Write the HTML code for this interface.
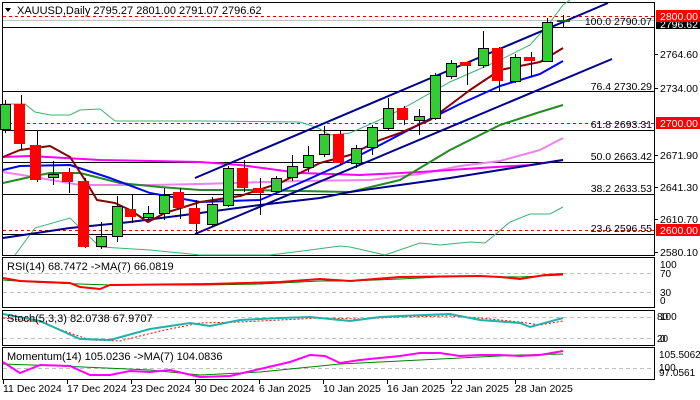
<!DOCTYPE html>
<html><head><meta charset="utf-8"><style>
html,body{margin:0;padding:0;background:#fff;width:700px;height:400px;overflow:hidden}
svg{display:block;font-family:"Liberation Sans",sans-serif}
</style></head><body>
<svg width="700" height="400" viewBox="0 0 700 400" xmlns="http://www.w3.org/2000/svg">
<rect width="700" height="400" fill="#fff"/>
<!-- panel frames -->
<g fill="none" stroke="#000" stroke-width="1">
<rect x="2.5" y="2.5" width="652" height="253"/>
<rect x="2.5" y="257.5" width="652" height="50"/>
<rect x="2.5" y="310.5" width="652" height="35"/>
<rect x="2.5" y="347.5" width="652" height="32"/>
</g>
<!-- fib horizontal lines -->
<g stroke="#000" stroke-width="1">
<line x1="3" y1="27.5" x2="654" y2="27.5"/>
<line x1="3" y1="91.5" x2="654" y2="91.5"/>
<line x1="3" y1="130.5" x2="654" y2="130.5"/>
<line x1="3" y1="162.5" x2="654" y2="162.5"/>
<line x1="3" y1="194.5" x2="654" y2="194.5"/>
<line x1="3" y1="234.5" x2="654" y2="234.5"/>
</g>
<line x1="3" y1="20.5" x2="654" y2="20.5" stroke="#c0c0c0"/>
<g stroke="#e00" stroke-dasharray="3,3">
<line x1="3" y1="16.5" x2="654" y2="16.5"/>
<line x1="3" y1="123.5" x2="654" y2="123.5"/>
<line x1="3" y1="230.5" x2="654" y2="230.5"/>
</g>
<!-- thin green bands -->
<g fill="none" stroke="#3cb371" stroke-width="1">
<polyline points="3,104 25,104 35,112 50,115 70,115 80,110 100,109 115,121 200,121 300,122 318,128 330,135 350,133 375,122 400,110 450,82 500,60 530,45 548,25 563,5 570,0"/>
<polyline points="15,255 35,228 70,218 100,247 150,250 200,255 270,255 310,250 340,246 350,247 385,255 420,243 440,245 470,242 485,243 510,222 530,214 550,214 563,207"/>
</g>
<!-- MAs -->
<g fill="none" stroke-width="2" stroke-linejoin="round">
<polyline stroke="#ee82ee" points="3,172 40,178 80,185 150,185 200,184 300,181 370,180 420,174 460,166 500,161 540,150 563,138"/>
<polyline stroke="#ff00ff" points="3,157 30,156 100,160 200,162 240,165 300,173 360,175 420,172 480,168 530,165 563,160"/>
<polyline stroke="#228b22" points="3,183 30,177 50,173 80,173 120,183 160,187 200,190 250,190 300,191 350,192 400,180 450,150 500,125 540,112 563,105"/>
<polyline stroke="#0000ff" points="3,170 20,166 70,165 110,178 150,193 200,202 260,200 300,183 340,165 380,145 420,124 460,104 500,86 540,74 563,61"/>
<polyline stroke="#00008b" points="3,238 70,228 130,222 200,213 260,205 320,198 350,192 400,185 450,178 500,170 563,160"/>
<polyline stroke="#8b0000" points="3,157 20,150 50,146 70,157 85,180 97,200 115,203 130,210 148,222 165,213 200,202 240,196 280,183 320,163 350,155 380,140 400,133 430,120 470,90 500,70 540,62 563,48"/>
</g>
<!-- channel lines -->
<g stroke="#00008b" stroke-width="2">
<line x1="195" y1="178" x2="608" y2="3"/>
<line x1="195" y1="234" x2="612" y2="59"/>
</g>
<!-- candles -->
<g stroke="#000" stroke-width="1">
<line x1="5.5" y1="100" x2="5.5" y2="133"/><line x1="21.5" y1="95" x2="21.5" y2="150"/><line x1="37.5" y1="131" x2="37.5" y2="182"/><line x1="53.5" y1="161" x2="53.5" y2="185"/><line x1="69.5" y1="168" x2="69.5" y2="193"/><line x1="85.5" y1="178" x2="85.5" y2="248"/><line x1="101.5" y1="222" x2="101.5" y2="249"/><line x1="117.5" y1="196" x2="117.5" y2="242"/><line x1="132.5" y1="195" x2="132.5" y2="223"/><line x1="148.5" y1="206" x2="148.5" y2="220"/><line x1="164.5" y1="188" x2="164.5" y2="220"/><line x1="180.5" y1="188" x2="180.5" y2="219"/><line x1="196.5" y1="200" x2="196.5" y2="234"/><line x1="212.5" y1="197" x2="212.5" y2="227"/><line x1="228.5" y1="166" x2="228.5" y2="207"/><line x1="244.5" y1="160" x2="244.5" y2="192"/><line x1="260.5" y1="178" x2="260.5" y2="215"/><line x1="276.5" y1="176" x2="276.5" y2="193"/><line x1="292.5" y1="155" x2="292.5" y2="181"/><line x1="308.5" y1="146" x2="308.5" y2="172"/><line x1="324.5" y1="126" x2="324.5" y2="157"/><line x1="340.5" y1="130" x2="340.5" y2="165"/><line x1="356.5" y1="145" x2="356.5" y2="168"/><line x1="372.5" y1="125" x2="372.5" y2="155"/><line x1="388.5" y1="98" x2="388.5" y2="131"/><line x1="404.5" y1="106" x2="404.5" y2="125"/><line x1="419.5" y1="109" x2="419.5" y2="135"/><line x1="435.5" y1="73" x2="435.5" y2="120"/><line x1="451.5" y1="60" x2="451.5" y2="79"/><line x1="467.5" y1="62" x2="467.5" y2="85"/><line x1="483.5" y1="31" x2="483.5" y2="68"/><line x1="499.5" y1="47" x2="499.5" y2="91"/><line x1="515.5" y1="54" x2="515.5" y2="83"/><line x1="531.5" y1="52" x2="531.5" y2="76"/><line x1="547.5" y1="18" x2="547.5" y2="62"/><line x1="563.5" y1="15" x2="563.5" y2="27"/>
</g>
<g fill="#32cd32" stroke="#000" stroke-width="1">
<rect x="0.5" y="104.5" width="10" height="25"/><rect x="48.5" y="174.5" width="10" height="3"/><rect x="96.5" y="236.5" width="10" height="10"/><rect x="112.5" y="206.5" width="10" height="30"/><rect x="143.5" y="213.5" width="10" height="4"/><rect x="159.5" y="195.5" width="10" height="18"/><rect x="207.5" y="204.5" width="10" height="20"/><rect x="223.5" y="168.5" width="10" height="37"/><rect x="271.5" y="178.5" width="10" height="13"/><rect x="287.5" y="166.5" width="10" height="11"/><rect x="303.5" y="155.5" width="10" height="12"/><rect x="319.5" y="134.5" width="10" height="20"/><rect x="351.5" y="148.5" width="10" height="15"/><rect x="367.5" y="127.5" width="10" height="20"/><rect x="383.5" y="108.5" width="10" height="20"/><rect x="414.5" y="116.5" width="10" height="4"/><rect x="430.5" y="75.5" width="10" height="43"/><rect x="446.5" y="63.5" width="10" height="13"/><rect x="478.5" y="48.5" width="10" height="17"/><rect x="510.5" y="57.5" width="10" height="24"/><rect x="542.5" y="22.5" width="10" height="39"/>
</g>
<rect x="7" y="0" width="0" height="0"/>
<g fill="#ff0000">
<rect x="14" y="104" width="11" height="40"/><rect x="30" y="145" width="11" height="35"/><rect x="62" y="172" width="11" height="10"/><rect x="78" y="181" width="11" height="66"/><rect x="125" y="209" width="11" height="8"/><rect x="173" y="192" width="11" height="16"/><rect x="189" y="208" width="11" height="16"/><rect x="237" y="168" width="11" height="20"/><rect x="253" y="188" width="11" height="5"/><rect x="333" y="134" width="11" height="29"/><rect x="397" y="108" width="11" height="12"/><rect x="460" y="62" width="11" height="4"/><rect x="492" y="48" width="11" height="33"/><rect x="524" y="57" width="11" height="4"/>
</g>
<line x1="557" y1="21" x2="570" y2="21" stroke="#000" stroke-width="2"/>
<line x1="557" y1="21" x2="570" y2="21" stroke="#32cd32" stroke-width="1"/>
<!-- header -->
<polygon points="5,8 11,8 8,12" fill="#000"/>
<text x="17" y="14" font-size="11" fill="#000">XAUUSD,Daily  2795.27 2801.00 2791.07 2796.62</text>
<!-- fib labels -->
<g font-size="10.5" fill="#000" text-anchor="end">
<text x="652" y="25">100.0 2790.07</text>
<text x="652" y="90">76.4 2730.29</text>
<text x="652" y="128">61.8 2693.31</text>
<text x="652" y="160">50.0 2663.42</text>
<text x="652" y="192">38.2 2633.53</text>
<text x="652" y="232">23.6 2596.55</text>
</g>
<!-- price axis -->
<g stroke="#000"><line x1="655" y1="54.5" x2="658" y2="54.5"/><line x1="655" y1="88.5" x2="658" y2="88.5"/><line x1="655" y1="155.5" x2="658" y2="155.5"/><line x1="655" y1="187.5" x2="658" y2="187.5"/><line x1="655" y1="219.5" x2="658" y2="219.5"/><line x1="655" y1="252.5" x2="658" y2="252.5"/></g>
<rect x="656" y="21" width="44" height="8" fill="#000"/>
<text x="660" y="28" font-size="10.5" fill="#fff">2796.62</text>
<g font-size="10.5" fill="#000">
<text x="660" y="58">2764.60</text><text x="660" y="92">2734.00</text><text x="660" y="159">2671.90</text><text x="660" y="191">2641.30</text><text x="660" y="223">2610.70</text><text x="660" y="256">2580.10</text>
</g>
<g fill="#ff0000"><rect x="656" y="10" width="44" height="12"/><rect x="656" y="117" width="44" height="12"/><rect x="656" y="224" width="44" height="12"/></g>
<g font-size="10.5" fill="#fff"><text x="660" y="20">2800.00</text><text x="660" y="127">2700.00</text><text x="660" y="234">2600.00</text></g>
<!-- RSI -->
<g stroke="#c0c0c0" stroke-dasharray="4,3"><line x1="3" y1="273.5" x2="654" y2="273.5"/><line x1="3" y1="292.5" x2="654" y2="292.5"/>
<line x1="3" y1="317.5" x2="654" y2="317.5"/><line x1="3" y1="338.5" x2="654" y2="338.5"/><line x1="3" y1="368.5" x2="654" y2="368.5"/></g>
<polyline fill="none" stroke="#008000" stroke-width="1" points="3,280 30,282 80,284 110,285 200,285 260,284 320,281 350,281 400,279 460,276 520,277 563,275"/>
<polyline fill="none" stroke="#ff0000" stroke-width="2" points="3,278 20,281 70,283 80,287 100,289 110,285 210,284 280,282 320,279 350,281 400,277 480,276 500,277 520,279 545,275 563,274"/>
<text x="7" y="270" font-size="11" fill="#000">RSI(14) 68.7472  -&gt;MA(7) 66.0819</text>
<g font-size="10" fill="#000"><text x="660" y="268">100</text><text x="660" y="277">70</text><text x="660" y="296">30</text><text x="660" y="304">0</text></g>
<!-- Stoch -->
<polyline fill="none" stroke="#ff0000" stroke-dasharray="2,2" points="3,318 40,322 70,333 90,340 120,341 160,331 200,323 240,322 280,320 320,318 360,319 400,317 450,316 480,318 520,322 540,325 563,321"/>
<polyline fill="none" stroke="#20b2aa" stroke-width="2" points="3,314 40,321 60,330 80,339 110,340 150,329 190,323 210,326 240,320 280,318 310,317 350,321 380,317 400,316 450,314 480,320 520,323 530,327 563,318"/>
<text x="7" y="322" font-size="11" fill="#000">Stoch(5,3,3) 82.0738 67.9707</text>
<g font-size="10" fill="#000"><text x="657" y="320">80</text><text x="660" y="320">100</text><text x="657" y="342">20</text><text x="660" y="342">0</text></g>
<!-- Momentum -->
<polyline fill="none" stroke="#008000" stroke-width="1" points="3,364 60,366 150,370 200,375 260,372 300,368 340,364 400,361 460,358 520,355 563,354"/>
<polyline fill="none" stroke="#ff00ff" stroke-width="2" points="3,362 20,373 40,365 70,366 90,375 110,375 130,371 150,372 170,370 200,377 230,376 260,369 290,362 310,355 325,356 340,363 360,360 400,356 420,353 440,353 460,356 480,355 500,355 520,356 540,355 563,351"/>
<text x="7" y="360" font-size="11" fill="#000">Momentum(14) 105.0236  -&gt;MA(7) 104.0836</text>
<g font-size="10" fill="#000"><text x="659" y="358">105.5062</text><text x="659" y="371">100</text><text x="659" y="376">97.0561</text></g>
<!-- date axis -->
<g stroke="#000"><line x1="3.5" y1="380" x2="3.5" y2="384"/><line x1="67.5" y1="380" x2="67.5" y2="384"/><line x1="131.5" y1="380" x2="131.5" y2="384"/><line x1="195.5" y1="380" x2="195.5" y2="384"/><line x1="259.5" y1="380" x2="259.5" y2="384"/><line x1="323.5" y1="380" x2="323.5" y2="384"/><line x1="387.5" y1="380" x2="387.5" y2="384"/><line x1="451.5" y1="380" x2="451.5" y2="384"/><line x1="515.5" y1="380" x2="515.5" y2="384"/></g>
<g font-size="10.5" fill="#000">
<text x="3" y="392">11 Dec 2024</text><text x="67" y="392">17 Dec 2024</text><text x="131" y="392">23 Dec 2024</text><text x="195" y="392">30 Dec 2024</text><text x="259" y="392">6 Jan 2025</text><text x="323" y="392">10 Jan 2025</text><text x="387" y="392">16 Jan 2025</text><text x="451" y="392">22 Jan 2025</text><text x="515" y="392">28 Jan 2025</text>
</g>
</svg>
</body></html>
